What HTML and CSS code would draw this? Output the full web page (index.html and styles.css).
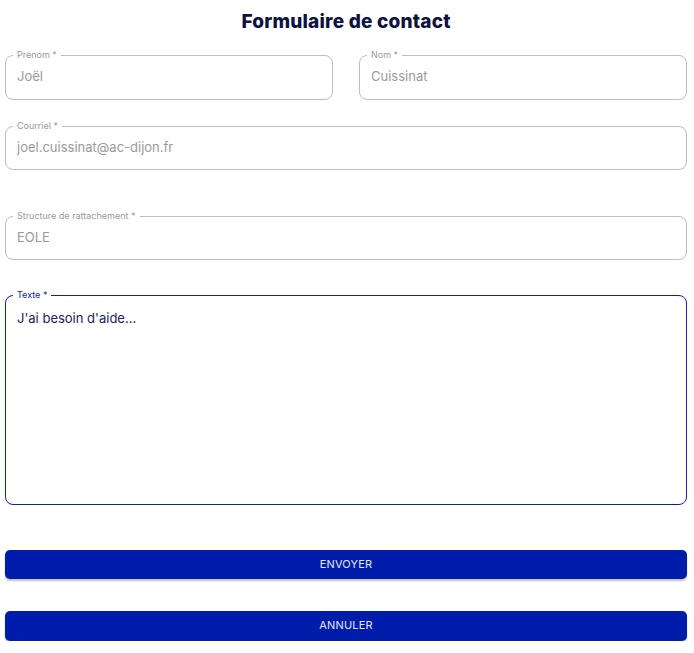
FILE: index.html
```html
<!DOCTYPE html>
<html lang="fr">
<head>
<meta charset="utf-8">
<title>Formulaire de contact</title>
<link rel="stylesheet" href="styles.css">
</head>
<body>
<main class="page">
  <h1 class="title">Formulaire de contact</h1>
  <form class="form">
    <div class="row-two">
      <fieldset class="field">
        <legend class="legend">Prénom *</legend>
        <input class="input" type="text" value="Joël" readonly>
      </fieldset>
      <fieldset class="field">
        <legend class="legend">Nom *</legend>
        <input class="input" type="text" value="Cuissinat" readonly>
      </fieldset>
    </div>
    <fieldset class="field field-mail">
      <legend class="legend">Courriel *</legend>
      <input class="input" type="text" value="joel.cuissinat@ac-dijon.fr" readonly>
    </fieldset>
    <fieldset class="field field-struct">
      <legend class="legend">Structure de rattachement *</legend>
      <input class="input" type="text" value="EOLE" readonly>
    </fieldset>
    <fieldset class="field field-text">
      <legend class="legend legend-active">Texte *</legend>
      <textarea class="textarea">J'ai besoin d'aide...</textarea>
    </fieldset>
    <button type="button" class="btn btn-send">Envoyer</button>
    <button type="button" class="btn btn-cancel">Annuler</button>
  </form>
</main>
</body>
</html>
```

FILE: styles.css
```css
* { box-sizing: border-box; }
html, body { margin: 0; padding: 0; background: #ffffff; }
body {
  font-family: "Inter", "Roboto", "Liberation Sans", sans-serif;
  color: #0c1242;
}
.page {
  padding: 10px 7px 0 5px;
}
.title {
  margin: 0;
  font-size: 19px;
  line-height: 24px;
  font-weight: 800;
  text-align: center;
  color: #0c1242;
  letter-spacing: 0.2px;
}
.form {
  display: flex;
  flex-direction: column;
  margin-top: 16px;
}
.row-two {
  display: grid;
  grid-template-columns: 1fr 1fr;
  column-gap: 26px;
}
.field {
  margin: 0;
  padding: 0 7px;
  border: 1px solid #bdbdbd;
  border-radius: 8px;
  min-width: 0;
}
.legend {
  font-size: 9px;
  line-height: 10px;
  padding: 0 4px;
  color: #9a9a9a;
}
.input {
  display: block;
  width: 100%;
  height: 32px;
  margin: 0 0 7px 0;
  padding: 0 4px;
  border: 0;
  outline: none;
  background: transparent;
  font-family: inherit;
  font-size: 13px;
  color: #9a9a9a;
}
.field-mail { margin-top: 21px; }
.field-mail .input { margin-bottom: 6px; }
.field-struct { margin-top: 41px; }
.field-struct .input { margin-bottom: 6px; }
.field-text {
  margin-top: 30px;
  border-color: #0d22a8;
}
.legend-active { color: #0d22a8; }
.textarea {
  display: block;
  width: 100%;
  height: 204px;
  margin: 0;
  padding: 10px 4px 0 4px;
  border: 0;
  outline: none;
  resize: none;
  background: transparent;
  font-family: inherit;
  font-size: 13px;
  line-height: 16px;
  color: #1c2262;
}
.btn {
  display: block;
  width: 100%;
  height: 29px;
  padding: 0 0 2px 0;
  border: 0;
  border-radius: 5px;
  background: #001caa;
  color: #e4e7ff;
  font-family: inherit;
  font-size: 11px;
  text-transform: uppercase;
  letter-spacing: 0.2px;
  box-shadow: 0 2px 2px rgba(0, 0, 0, 0.25);
  cursor: pointer;
}
.btn-send { margin-top: 45px; }
.btn-cancel { margin-top: 32px; height: 30px; }
```
